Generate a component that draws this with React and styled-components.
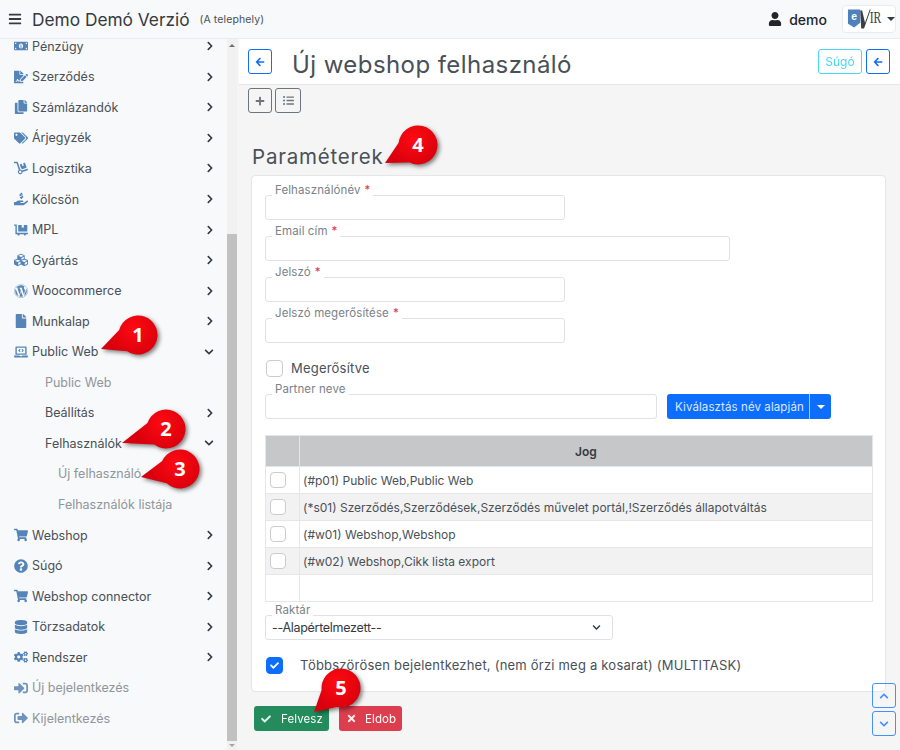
import React from 'react'
import styled, { createGlobalStyle } from 'styled-components'
import {
  FaMoneyBillAlt, FaFileSignature, FaCopy, FaTags, FaDolly, FaHandHoldingUsd, FaDollyFlatbed,
  FaCubes, FaWordpress, FaFile, FaLaptopCode, FaShoppingCart, FaQuestionCircle, FaDatabase,
  FaCogs, FaSignInAlt, FaSignOutAlt, FaChevronRight, FaChevronDown, FaChevronUp, FaBars, FaUser,
  FaArrowLeft, FaPlus, FaListUl, FaCheck, FaTimes,
} from 'react-icons/fa'

const menu = [
  { label: 'Pénzügy', icon: FaMoneyBillAlt, arrow: 'right' },
  { label: 'Szerződés', icon: FaFileSignature, arrow: 'right' },
  { label: 'Számlázandók', icon: FaCopy, arrow: 'right' },
  { label: 'Árjegyzék', icon: FaTags, arrow: 'right' },
  { label: 'Logisztika', icon: FaDolly, arrow: 'right' },
  { label: 'Kölcsön', icon: FaHandHoldingUsd, arrow: 'right' },
  { label: 'MPL', icon: FaDollyFlatbed, arrow: 'right' },
  { label: 'Gyártás', icon: FaCubes, arrow: 'right' },
  { label: 'Woocommerce', icon: FaWordpress, arrow: 'right' },
  { label: 'Munkalap', icon: FaFile, arrow: 'right' },
  { label: 'Public Web', icon: FaLaptopCode, arrow: 'down' },
  { label: 'Public Web', level: 1, muted: true },
  { label: 'Beállítás', level: 1, arrow: 'right' },
  { label: 'Felhasználók', level: 1, arrow: 'down' },
  { label: 'Új felhasználó', level: 2, muted: true },
  { label: 'Felhasználók listája', level: 2, muted: true },
  { label: 'Webshop', icon: FaShoppingCart, arrow: 'right' },
  { label: 'Súgó', icon: FaQuestionCircle, arrow: 'right' },
  { label: 'Webshop connector', icon: FaShoppingCart, arrow: 'right' },
  { label: 'Törzsadatok', icon: FaDatabase, arrow: 'right' },
  { label: 'Rendszer', icon: FaCogs, arrow: 'right' },
  { label: 'Új bejelentkezés', icon: FaSignInAlt, muted: true },
  { label: 'Kijelentkezés', icon: FaSignOutAlt, muted: true },
]

const rights = [
  '(#p01) Public Web,Public Web',
  '(*s01) Szerződés,Szerződések,Szerződés művelet portál,!Szerződés állapotváltás',
  '(#w01) Webshop,Webshop',
  '(#w02) Webshop,Cikk lista export',
]

const callouts = [
  { n: 1, x: 138, y: 335, tx: 101, ty: 349 },
  { n: 2, x: 166, y: 429, tx: 122, ty: 443 },
  { n: 3, x: 180, y: 469, tx: 141, ty: 477 },
  { n: 4, x: 418, y: 145, tx: 385, ty: 163 },
  { n: 5, x: 341, y: 688, tx: 314, ty: 712 },
]

const GlobalStyle = createGlobalStyle`
  html, body { margin: 0; padding: 0; background: #f5f5f5; }
  * { box-sizing: border-box; }
  body { font-family: Inter, "Open Sans", sans-serif; color: #495057; }
`

const Page = styled.div`
  position: relative;
  width: 900px;
  height: 750px;
  overflow: hidden;
  background: #f5f5f5;
`

const Topbar = styled.header`
  display: flex;
  align-items: center;
  height: 39px;
  padding: 0 4px 0 8px;
  background: #f8f9fa;
  border-bottom: 1px solid #e9ecef;
  color: #343a40;
`

const Brand = styled.div`
  margin-left: 10px;
  font-size: 17.3px;
`

const Branch = styled.div`
  margin-left: 10px;
  font-size: 10.5px;
  letter-spacing: 0.1px;
  color: #495057;
`

const UserName = styled.div`
  display: flex;
  align-items: center;
  gap: 7px;
  margin-left: auto;
  font-size: 14px;
  font-weight: 450;
  color: #212529;
`

const LogoButton = styled.div`
  display: flex;
  align-items: center;
  gap: 4px;
  width: 54px;
  height: 28px;
  margin-left: 15px;
  padding-left: 4px;
  background: #fff;
  border: 1px solid #e9ecef;
  border-radius: 4px;
`

const Caret = styled.span`
  width: 0;
  height: 0;
  border-top: 4px solid ${(p) => p.$color || '#343a40'};
  border-left: 4px solid transparent;
  border-right: 4px solid transparent;
`

const Body = styled.div`
  display: flex;
  height: 711px;
`

const Sidebar = styled.nav`
  width: 227px;
  overflow: hidden;
  background: #f8f9fa;
`

const MenuList = styled.ul`
  list-style: none;
  margin: -8px 0 0;
  padding: 0;
`

const MenuRow = styled.li`
  display: flex;
  align-items: center;
  height: 30.55px;
  padding-left: ${(p) => [14, 45, 58][p.$level]}px;
  padding-right: 12px;
  font-size: 12.5px;
  color: ${(p) => (p.$muted ? '#8f969c' : '#495057')};
`

const MenuIcon = styled.span`
  display: flex;
  justify-content: center;
  width: 14px;
  margin-right: 4px;
  font-size: 14px;
  color: ${(p) => (p.$muted ? '#6f93bd' : '#5585b8')};
`

const MenuArrow = styled.span`
  display: flex;
  margin-left: auto;
  font-size: 10px;
  color: #343a40;
  margin-right: ${(p) => (p.$down ? 1 : 0)}px;
`

const Scrollbar = styled.div`
  display: flex;
  flex-direction: column;
  align-items: center;
  width: 10px;
  background: #f1f1f1;
`

const ScrollArrow = styled.span`
  flex: none;
  width: 0;
  height: 0;
  margin: ${(p) => (p.$up ? '5px 0 0' : 'auto 0 3px')};
  border-left: 3px solid transparent;
  border-right: 3px solid transparent;
  ${(p) => (p.$up ? 'border-bottom: 3px solid #6f6f6f;' : 'border-top: 3px solid #a3a3a3;')}
`

const ScrollThumb = styled.div`
  flex: none;
  width: 100%;
  height: 507px;
  margin-top: 187px;
  background: #c1c1c1;
`

const Main = styled.main`
  flex: 1;
  margin-left: 2px;
  min-width: 0;
`

const PageHeader = styled.div`
  display: flex;
  align-items: center;
  gap: 4px;
  height: 46px;
  padding: 0 10px 0 9px;
  background: #fff;
  border-bottom: 1px solid #e6e6e6;
`

const PageTitle = styled.h1`
  flex: 1;
  margin: 6px 0 0 16px;
  font-size: 24px;
  font-weight: 400;
  letter-spacing: 0.43px;
  color: #495057;
`

const OutlineButton = styled.button`
  display: inline-flex;
  align-items: center;
  justify-content: center;
  height: 25px;
  width: ${(p) => p.$w || 24}px;
  padding: 0;
  background: transparent;
  border: 1px solid ${(p) => p.$color || '#0d6efd'};
  border-radius: 3px;
  color: ${(p) => p.$color || '#0d6efd'};
  font-family: inherit;
  font-size: 12px;
  opacity: ${(p) => (p.$soft ? 0.75 : 1)};
`

const Toolbar = styled.div`
  display: flex;
  gap: 3px;
  padding: 3px 0 0 9px;
`

const SectionTitle = styled.h2`
  margin: 31px 0 0 13px;
  height: 31px;
  line-height: 26px;
  font-size: 20.5px;
  font-weight: 400;
  letter-spacing: 0.8px;
  color: #495057;
`

const Card = styled.section`
  width: 635px;
  margin-left: 12px;
  padding: 19px 13px 17px;
  background: #fff;
  border: 1px solid #e6e6e6;
  border-radius: 4px;
`

const Fields = styled.div`
  display: flex;
  flex-direction: column;
  gap: 16px;
`

const Field = styled.div`
  position: relative;
  width: ${(p) => p.$w}px;
  height: 25px;
  flex: none;
`

const FieldBox = styled.div`
  display: flex;
  align-items: center;
  justify-content: space-between;
  width: 100%;
  height: 100%;
  padding: 0 11px 0 6px;
  background: #fff;
  border: 1px solid #dee2e6;
  border-radius: 3px;
  font-size: 12.5px;
  letter-spacing: -0.3px;
  color: #343a40;
`

const FieldLabel = styled.label`
  position: absolute;
  left: 7px;
  top: -12px;
  padding: 0 3px 0 3px;
  background: #fff;
  font-size: 11.5px;
  line-height: 14px;
  letter-spacing: 0.1px;
  color: #7b8288;
  b {
    color: #dc3545;
    font-weight: 400;
    margin-left: 4px;
  }
`

const CheckRow = styled.div`
  display: flex;
  align-items: center;
  height: 18px;
  margin-top: 16px;
  padding-left: 1px;
  font-size: 13px;
  letter-spacing: 0.21px;
  color: #495057;
`

const CheckBox = styled.span`
  display: inline-flex;
  flex: none;
  align-items: center;
  justify-content: center;
  width: ${(p) => p.$size || 17}px;
  height: ${(p) => p.$size || 17}px;
  margin-right: ${(p) => p.$gap || 0}px;
  background: ${(p) => (p.$on ? '#0d6efd' : '#fff')};
  border: 1px solid ${(p) => (p.$on ? '#0d6efd' : '#c8ccd0')};
  border-radius: 4px;
  color: #fff;
  font-size: 9px;
`

const PartnerRow = styled.div`
  display: flex;
  gap: 10px;
  margin-top: 17px;
`

const SplitButton = styled.div`
  display: flex;
  height: 25px;
  border-radius: 3px;
  overflow: hidden;
  background: #0d6efd;
  color: #dbe8ff;
  font-size: 11.5px;
  letter-spacing: 0.1px;
`

const SplitMain = styled.span`
  display: flex;
  align-items: center;
  width: 143px;
  padding-left: 8px;
  white-space: nowrap;
  border-right: 1px solid #a9c9fb;
`

const SplitToggle = styled.span`
  display: flex;
  flex: 1;
  width: 21px;
  align-items: center;
  justify-content: center;
`

const RightsTable = styled.table`
  width: 608px;
  margin-top: 16px;
  border-collapse: collapse;
  table-layout: fixed;
  font-size: 12px;
  color: #495057;
  th, td {
    padding: 0;
    border: 1px solid #e4e6e8;
  }
  th {
    height: 31px;
    background: #c6c7c9;
    font-weight: 600;
    color: #343a40;
  }
  td {
    height: 27px;
  }
  td + td {
    padding-left: 3px;
  }
  tbody tr:nth-child(even) td {
    background: #f2f2f2;
  }
`

const CheckCell = styled.td`
  padding-left: 4px !important;
  line-height: 0;
`

const SelectField = styled(Field)`
  margin-top: 13px;
`

const Actions = styled.div`
  display: flex;
  gap: 10px;
  margin: 14px 0 0 15px;
`

const ActionButton = styled.button`
  display: flex;
  align-items: center;
  gap: ${(p) => p.$gap}px;
  width: ${(p) => p.$w}px;
  height: 25px;
  padding: 0 0 0 7px;
  background: ${(p) => p.$bg};
  border: 0;
  border-radius: 3px;
  color: #fff;
  font-family: inherit;
  font-size: 11.5px;
  letter-spacing: 0.1px;
  opacity: 0.95;
  svg { opacity: 0.9; }
`

const ScrollButtons = styled.div`
  position: absolute;
  left: 872px;
  top: 683px;
  display: flex;
  flex-direction: column;
  gap: 3px;
`

const CalloutWrap = styled.div`
  position: absolute;
  left: ${(p) => p.$x}px;
  top: ${(p) => p.$y}px;
  width: 0;
  height: 0;
  svg {
    position: absolute;
    overflow: visible;
    left: 0;
    top: 0;
    filter: drop-shadow(2px 2px 2px rgba(0, 0, 0, 0.5));
  }
`

const CalloutNumber = styled.span`
  position: absolute;
  left: -15px;
  top: -14px;
  width: 30px;
  line-height: 28px;
  text-align: center;
  font-family: "Open Sans", sans-serif;
  font-size: 20px;
  font-weight: 700;
  color: #fff;
`

function Callout({ n, x, y, tx, ty }) {
  const r = 19.5
  const a = Math.atan2(ty - y, tx - x)
  const spread = 0.62
  const p1 = [r * Math.cos(a + spread), r * Math.sin(a + spread)]
  const p2 = [r * Math.cos(a - spread), r * Math.sin(a - spread)]
  const d = `M${tx - x} ${ty - y}L${p1[0]} ${p1[1]}A${r} ${r} 0 1 1 ${p2[0]} ${p2[1]}Z`
  return (
    <CalloutWrap $x={x} $y={y}>
      <svg width="1" height="1">
        <defs>
          <radialGradient id={`red${n}`} gradientUnits="userSpaceOnUse" cx="-4" cy="-6" r="28">
            <stop offset="0" stopColor="#ff0a12" />
            <stop offset="1" stopColor="#d8000c" />
          </radialGradient>
        </defs>
        <path d={d} fill={`url(#red${n})`} />
      </svg>
      <CalloutNumber>{n}</CalloutNumber>
    </CalloutWrap>
  )
}

function Logo() {
  return (
    <svg width="38" height="22" viewBox="0 0 38 22">
      <path d="M1 1h13v14l-6.5 5L1 16z" fill="#4f81bd" />
      <text x="7.5" y="12" textAnchor="middle" fontFamily="Liberation Sans, sans-serif" fontWeight="700" fontSize="11" fill="#fff">e</text>
      <path d="M14 2h2l3 13 5-14h1L18 21h-3z" fill="#3a3f45" />
      <text transform="translate(24 15) scale(0.72 1)" fontFamily="Liberation Serif, serif" fontSize="17" fill="#3a3f45">IR</text>
    </svg>
  )
}

function MenuItem({ item }) {
  const Icon = item.icon
  const level = item.level || 0
  return (
    <MenuRow $level={level} $muted={item.muted}>
      {Icon && <MenuIcon $muted={item.muted}><Icon /></MenuIcon>}
      {item.label}
      {item.arrow === 'right' && <MenuArrow><FaChevronRight /></MenuArrow>}
      {item.arrow === 'down' && <MenuArrow $down><FaChevronDown /></MenuArrow>}
    </MenuRow>
  )
}

function TextField({ label, required, width }) {
  return (
    <Field $w={width}>
      <FieldBox />
      <FieldLabel>{label}{required && <b>*</b>}</FieldLabel>
    </Field>
  )
}

export default function App() {
  return (
    <Page>
      <GlobalStyle />
      <Topbar>
        <FaBars size={14} />
        <Brand>Demo Demó Verzió</Brand>
        <Branch>(A telephely)</Branch>
        <UserName><FaUser size={14} />demo</UserName>
        <LogoButton><Logo /><Caret /></LogoButton>
      </Topbar>
      <Body>
        <Sidebar>
          <MenuList>
            {menu.map((item, i) => <MenuItem key={i} item={item} />)}
          </MenuList>
        </Sidebar>
        <Scrollbar>
          <ScrollArrow $up />
          <ScrollThumb />
          <ScrollArrow />
        </Scrollbar>
        <Main>
          <PageHeader>
            <OutlineButton><FaArrowLeft size={10} /></OutlineButton>
            <PageTitle>Új webshop felhasználó</PageTitle>
            <OutlineButton $w={44} $color="#0dcaf0" $soft>Súgó</OutlineButton>
            <OutlineButton><FaArrowLeft size={10} /></OutlineButton>
          </PageHeader>
          <Toolbar>
            <OutlineButton $color="#6c757d"><FaPlus size={10} /></OutlineButton>
            <OutlineButton $w={26} $color="#6c757d"><FaListUl size={11} /></OutlineButton>
          </Toolbar>
          <SectionTitle>Paraméterek</SectionTitle>
          <Card>
            <Fields>
              <TextField label="Felhasználónév" required width={300} />
              <TextField label="Email cím" required width={465} />
              <TextField label="Jelszó" required width={300} />
              <TextField label="Jelszó megerősítése" required width={300} />
            </Fields>
            <CheckRow>
              <CheckBox $gap={8} />
              Megerősítve
            </CheckRow>
            <PartnerRow>
              <TextField label="Partner neve" width={392} />
              <SplitButton>
                <SplitMain>Kiválasztás név alapján</SplitMain>
                <SplitToggle><Caret $color="#fff" /></SplitToggle>
              </SplitButton>
            </PartnerRow>
            <RightsTable>
              <colgroup>
                <col width="34" />
                <col />
              </colgroup>
              <thead>
                <tr><th /><th>Jog</th></tr>
              </thead>
              <tbody>
                {rights.map((r) => (
                  <tr key={r}>
                    <CheckCell><CheckBox $size={16} /></CheckCell>
                    <td>{r}</td>
                  </tr>
                ))}
                <tr><td /><td /></tr>
              </tbody>
            </RightsTable>
            <SelectField $w={348}>
              <FieldBox>
                --Alapértelmezett--
                <FaChevronDown size={9} />
              </FieldBox>
              <FieldLabel>Raktár</FieldLabel>
            </SelectField>
            <CheckRow>
              <CheckBox $on $gap={17}><FaCheck /></CheckBox>
              Többszörösen bejelentkezhet, (nem őrzi meg a kosarat) (MULTITASK)
            </CheckRow>
          </Card>
          <Actions>
            <ActionButton $w={75} $gap={10} $bg="#198754"><FaCheck size={10} />Felvesz</ActionButton>
            <ActionButton $w={63} $gap={8} $bg="#dc3545"><FaTimes size={11} />Eldob</ActionButton>
          </Actions>
        </Main>
      </Body>
      <ScrollButtons>
        <OutlineButton $soft><FaChevronUp size={10} /></OutlineButton>
        <OutlineButton $soft><FaChevronDown size={10} /></OutlineButton>
      </ScrollButtons>
      {callouts.map((c) => <Callout key={c.n} {...c} />)}
    </Page>
  )
}
